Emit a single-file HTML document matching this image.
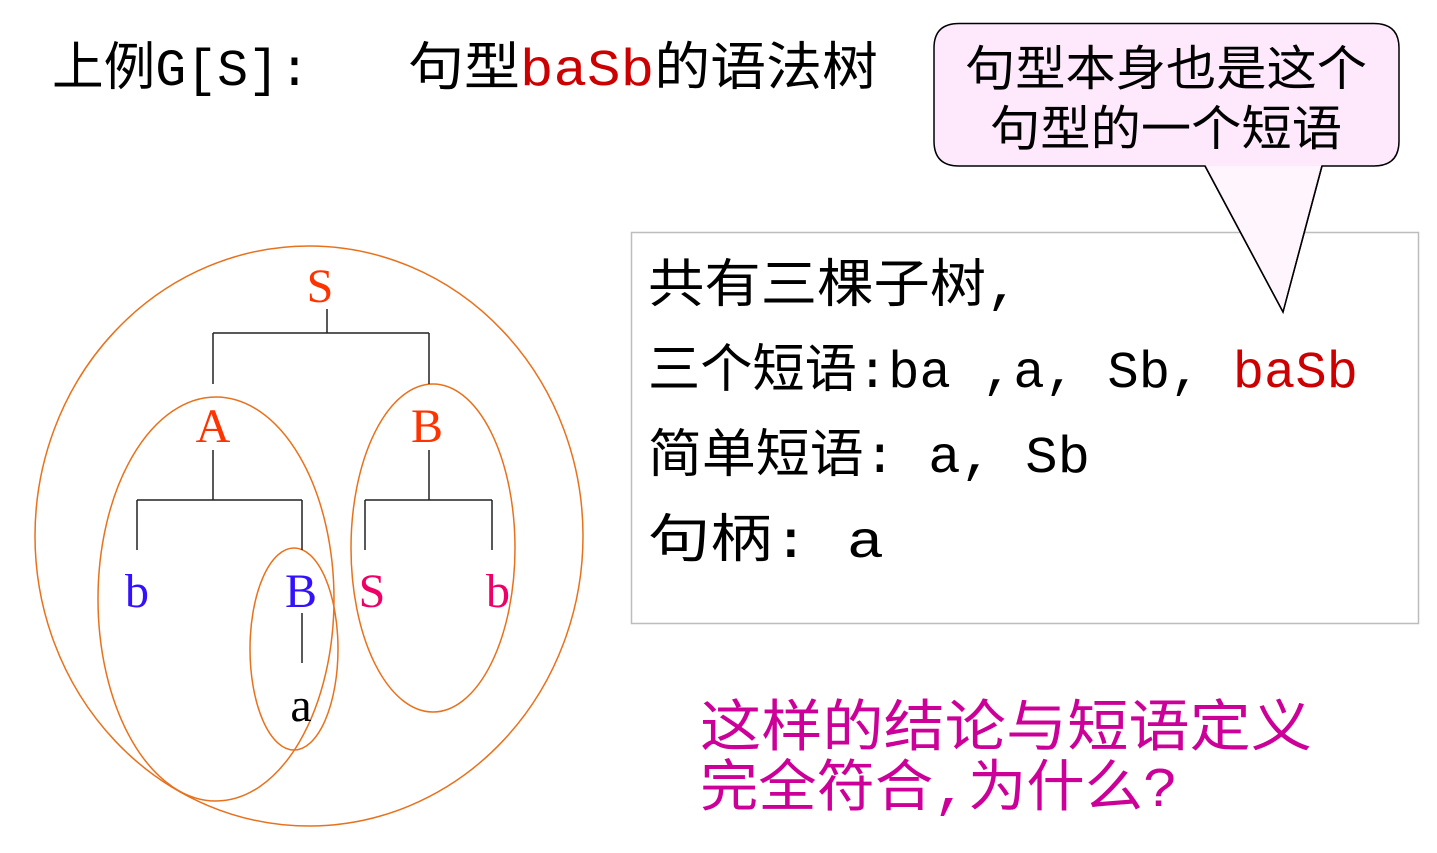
<!DOCTYPE html>
<html><head><meta charset="utf-8"><style>
html,body{margin:0;padding:0;background:#fff;}
svg{display:block;}
.c{font-family:"Liberation Serif","Noto Serif CJK SC",serif;}
.s{font-family:"Liberation Mono","Noto Sans CJK SC",sans-serif;}
.m{font-family:"Liberation Mono","Noto Sans CJK SC",monospace;}
</style></head><body>
<svg width="1437" height="853" viewBox="0 0 1437 853" xmlns="http://www.w3.org/2000/svg">
<rect width="1437" height="853" fill="#fff"/>
<text x="52" y="85" font-size="52" class="m" textLength="258" lengthAdjust="spacingAndGlyphs" fill="#000">上例G[S]:</text>
<text x="408" y="85" font-size="52" class="s" textLength="470" lengthAdjust="spacingAndGlyphs" fill="#000">句型<tspan fill="#cc0000">baSb</tspan>的语法树</text>

<rect x="631.5" y="232.5" width="787" height="391" fill="#fff" stroke="#bdbdbd" stroke-width="1.5"/>
<g class="s" font-size="52" fill="#000">
<text x="648" y="302" textLength="372" lengthAdjust="spacingAndGlyphs">共有三棵子树,</text>
<text x="648" y="387" textLength="710" lengthAdjust="spacingAndGlyphs">三个短语:ba ,a, Sb, <tspan fill="#cc0000">baSb</tspan></text>
<text x="648" y="472" textLength="442" lengthAdjust="spacingAndGlyphs">简单短语: a, Sb</text>
<text x="648" y="557" textLength="236" lengthAdjust="spacingAndGlyphs">句柄:  a</text>
</g>

<path d="M959,23.5 H1374 Q1399,23.5 1399,48 V141 Q1399,166 1374,166 H1322 L1283,312 L1205,166 H959 Q934,166 934,141 V48 Q934,23.5 959,23.5 Z" fill="#fde9fb" stroke="#000" stroke-width="1.5"/>
<path d="M1207,166 L1283,310 L1320,166" fill="#fff5fd" stroke="none"/>
<path d="M1205,166 L1283,312 L1322,166" fill="none" stroke="#000" stroke-width="1.5"/>
<g class="s" font-size="48" fill="#000" text-anchor="middle">
<text x="1166" y="85" textLength="402" lengthAdjust="spacingAndGlyphs">句型本身也是这个</text>
<text x="1166" y="145" textLength="352" lengthAdjust="spacingAndGlyphs">句型的一个短语</text>
</g>

<g fill="none" stroke="#e8711c" stroke-width="1.5">
<ellipse cx="309" cy="536" rx="274" ry="290"/>
<ellipse cx="216" cy="599" rx="118" ry="202"/>
<ellipse cx="294" cy="649" rx="44" ry="101"/>
<ellipse cx="433" cy="548" rx="82" ry="164"/>
</g>
<g stroke="#222" stroke-width="1.5" fill="none">
<path d="M327,309 V333 M213,333 H429 M213,333 V384 M429,333 V384"/>
<path d="M213,450 V500 M137,500 H302 M137,500 V550 M302,500 V550"/>
<path d="M429,450 V500 M365,500 H492 M365,500 V550 M492,500 V550"/>
<path d="M302,613 V663"/>
</g>
<g class="c" font-size="48" text-anchor="middle">
<text x="320" y="302" fill="#ff3300">S</text>
<text x="213" y="442" fill="#ff3300">A</text>
<text x="427" y="442" fill="#ff3300">B</text>
<text x="137" y="607" fill="#3311ff">b</text>
<text x="301" y="607" fill="#3311ff">B</text>
<text x="372" y="607" fill="#ee0066">S</text>
<text x="498" y="607" fill="#ee0066">b</text>
<text x="301" y="721" fill="#000">a</text>
</g>

<g class="s" font-size="56" fill="#cc0099">
<text x="700" y="746" textLength="612" lengthAdjust="spacingAndGlyphs">这样的结论与短语定义</text>
<text x="700" y="806" textLength="478" lengthAdjust="spacingAndGlyphs">完全符合,为什么?</text>
</g>
</svg>
</body></html>
